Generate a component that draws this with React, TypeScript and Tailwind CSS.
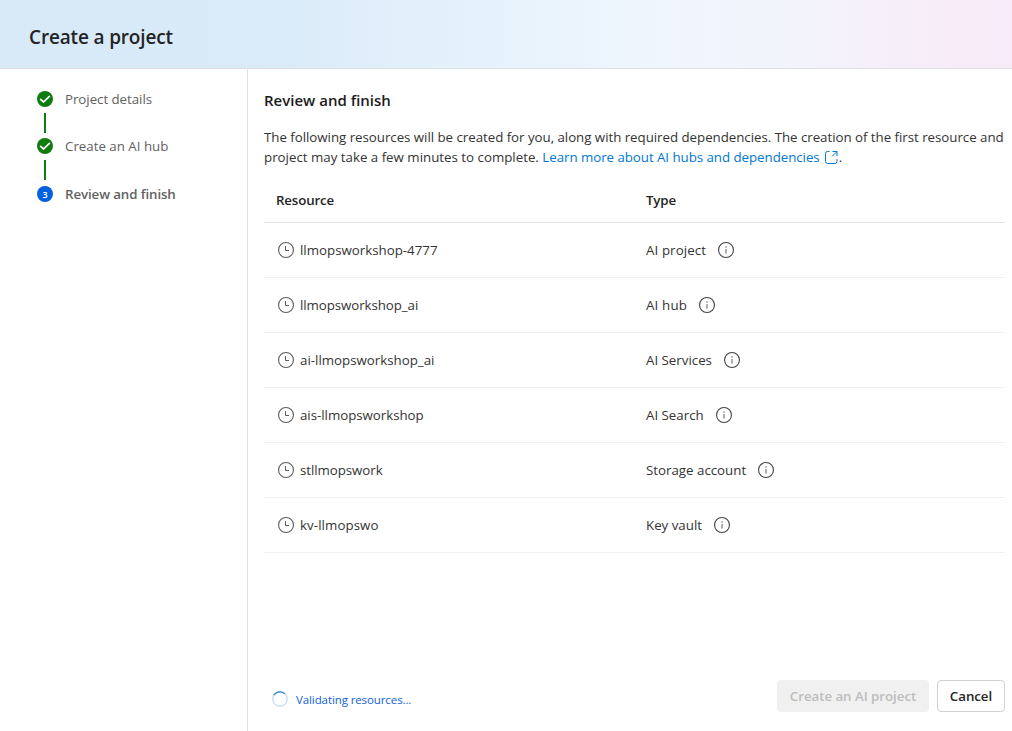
import React from "react";

const resources = [
  { name: "llmopsworkshop-4777", type: "AI project", nameTracking: "tracking-[0px]", typeTracking: "tracking-[0.1px]" },
  { name: "llmopsworkshop_ai", type: "AI hub", nameTracking: "tracking-[-0.07px]", typeTracking: "tracking-[0.17px]" },
  { name: "ai-llmopsworkshop_ai", type: "AI Services", nameTracking: "tracking-[0px]", typeTracking: "tracking-[0px]" },
  { name: "ais-llmopsworkshop", type: "AI Search", nameTracking: "tracking-[-0.03px]", typeTracking: "tracking-[0px]" },
  { name: "stllmopswork", type: "Storage account", nameTracking: "tracking-[-0.06px]", typeTracking: "tracking-[0px]" },
  { name: "kv-llmopswo", type: "Key vault", nameTracking: "tracking-[0.08px]", typeTracking: "tracking-[0px]" },
];

function CheckBadge() {
  return (
    <svg width="16" height="16" viewBox="0 0 16 16" fill="none">
      <circle cx="8" cy="8" r="8" fill="#107c10" />
      <path d="M3.6 8.3 6.6 11 12.4 5.4" stroke="#fff" strokeWidth="1.7" strokeLinecap="round" strokeLinejoin="round" />
    </svg>
  );
}

function ClockIcon() {
  return (
    <svg width="16" height="16" viewBox="0 0 16 16" fill="none" stroke="#5c5c5c">
      <circle cx="8" cy="8" r="7.45" strokeWidth="1.1" />
      <path d="M7.5 4V8.5H11" strokeWidth="1" />
    </svg>
  );
}

function InfoIcon() {
  return (
    <svg width="16" height="16" viewBox="0 0 16 16" fill="none">
      <circle cx="8" cy="8" r="7.45" stroke="#424242" strokeWidth="1.1" />
      <path d="M8 7V11.5" stroke="#6a6a6a" strokeWidth="1.1" />
      <circle cx="8" cy="5" r="0.75" fill="#6a6a6a" />
    </svg>
  );
}

function OpenIcon() {
  return (
    <svg width="13" height="13" viewBox="0 0 13 13" fill="none" stroke="#0078d4" strokeWidth="1">
      <path d="M4.5 0.5H2.5A2 2 0 0 0 0.5 2.5V10.5A2 2 0 0 0 2.5 12.5H10A2 2 0 0 0 12 10.5V8" />
      <path d="M7.5 0.5H12V5M11.9 0.6 7.2 5.3" />
    </svg>
  );
}

function Spinner() {
  return (
    <svg width="16" height="16" viewBox="0 0 16 16" fill="none" strokeWidth="1.3">
      <circle cx="8" cy="8" r="7.2" stroke="#bfdcf8" />
      <path d="M2.2 3.7A7.2 7.2 0 0 1 12.5 2.4" stroke="#2f7fd8" strokeLinecap="round" />
    </svg>
  );
}

export default function App() {
  return (
    <div className="flex h-[731px] w-[1012px] flex-col overflow-hidden bg-white font-['Open_Sans','Noto_Sans',sans-serif] text-[13.3px] leading-5 text-[#333333]">
      <header className="flex h-[69px] shrink-0 items-center border-b border-[#dcdfe3] bg-[linear-gradient(90deg,#d8eaf8_0%,#d9eaf8_25%,#dfeefa_36%,#e5f2fb_47%,#f0f6fe_66%,#f3f3fb_80%,#f8ebf8_96%,#f8eaf9_100%)] pl-[29px] pt-[6px]">
        <h1 className="whitespace-nowrap text-[19px] font-semibold leading-7 tracking-[-0.16px] text-[#242424]">Create a project</h1>
      </header>

      <div className="flex min-h-0 flex-1">
        <nav className="w-[248px] shrink-0 border-r border-[#e0e0e0] pl-[37px] pt-5 text-[#616161]">
          <div className="flex h-5 items-center gap-3">
            <CheckBadge />
            <span className="tracking-[-0.04px]">Project details</span>
          </div>
          <div className="ml-[7px] mt-1 h-5 w-0.5 bg-[#107c10]" />
          <div className="mt-[3px] flex h-5 items-center gap-3">
            <CheckBadge />
            <span>Create an AI hub</span>
          </div>
          <div className="ml-[7px] mt-1 h-5 w-0.5 bg-[#107c10]" />
          <div className="mt-1 flex h-5 items-center gap-3">
            <span className="flex size-4 items-center justify-center rounded-full bg-[#0060e0] text-[9px] font-semibold leading-none text-white">3</span>
            <span className="font-semibold tracking-[-0.1px]">Review and finish</span>
          </div>
        </nav>

        <main className="flex min-w-0 flex-1 flex-col pl-4 pr-[7px]">
          <h2 className="mt-5 text-[15px] font-semibold leading-[22px] text-[#1b1b1b]">Review and finish</h2>
          <p className="mt-4 whitespace-nowrap">
            <span className="tracking-[-0.03px]">The following resources will be created for you, along with required dependencies. The creation of the first resource and</span>
            <br />
            <span>project may take a few minutes to complete. </span>
            <a className="tracking-[-0.04px] text-[#0078d4]">
              Learn more about AI hubs and dependencies
              <span className="ml-[5px] mr-px inline-block align-[-2px]"><OpenIcon /></span>
            </a>
            <span>.</span>
          </p>

          <div className="mt-[11px] flex h-[45px] items-center border-b border-[#e4e4e4] pl-3 font-semibold tracking-[-0.15px] text-[#242424]">
            <span className="w-[370px]">Resource</span>
            <span>Type</span>
          </div>
          {resources.map((item) => (
            <div key={item.name} className="flex h-[55px] items-center border-b border-[#f1f1f1]">
              <div className="flex w-[382px] items-center gap-1.5 pl-3.5">
                <ClockIcon />
                <span className={item.nameTracking}>{item.name}</span>
              </div>
              <div className="flex items-center gap-3">
                <span className={item.typeTracking}>{item.type}</span>
                <InfoIcon />
              </div>
            </div>
          ))}

          <footer className="mb-[19px] mt-auto flex h-8 items-center justify-between pl-2">
            <div className="mt-1.5 flex items-center gap-2 text-[11.5px] tracking-[-0.1px]">
              <Spinner />
              <span className="mt-px text-[#0f62d6]">Validating resources...</span>
            </div>
            <div className="flex gap-2 font-semibold">
              <button className="h-8 w-[152px] whitespace-nowrap rounded bg-[#f0f0f0] tracking-[-0.04px] text-[#bdbdbd]">Create an AI project</button>
              <button className="h-8 w-[68px] rounded border border-[#d1d1d1] bg-white tracking-[-0.04px] text-[#242424]">Cancel</button>
            </div>
          </footer>
        </main>
      </div>
    </div>
  );
}
